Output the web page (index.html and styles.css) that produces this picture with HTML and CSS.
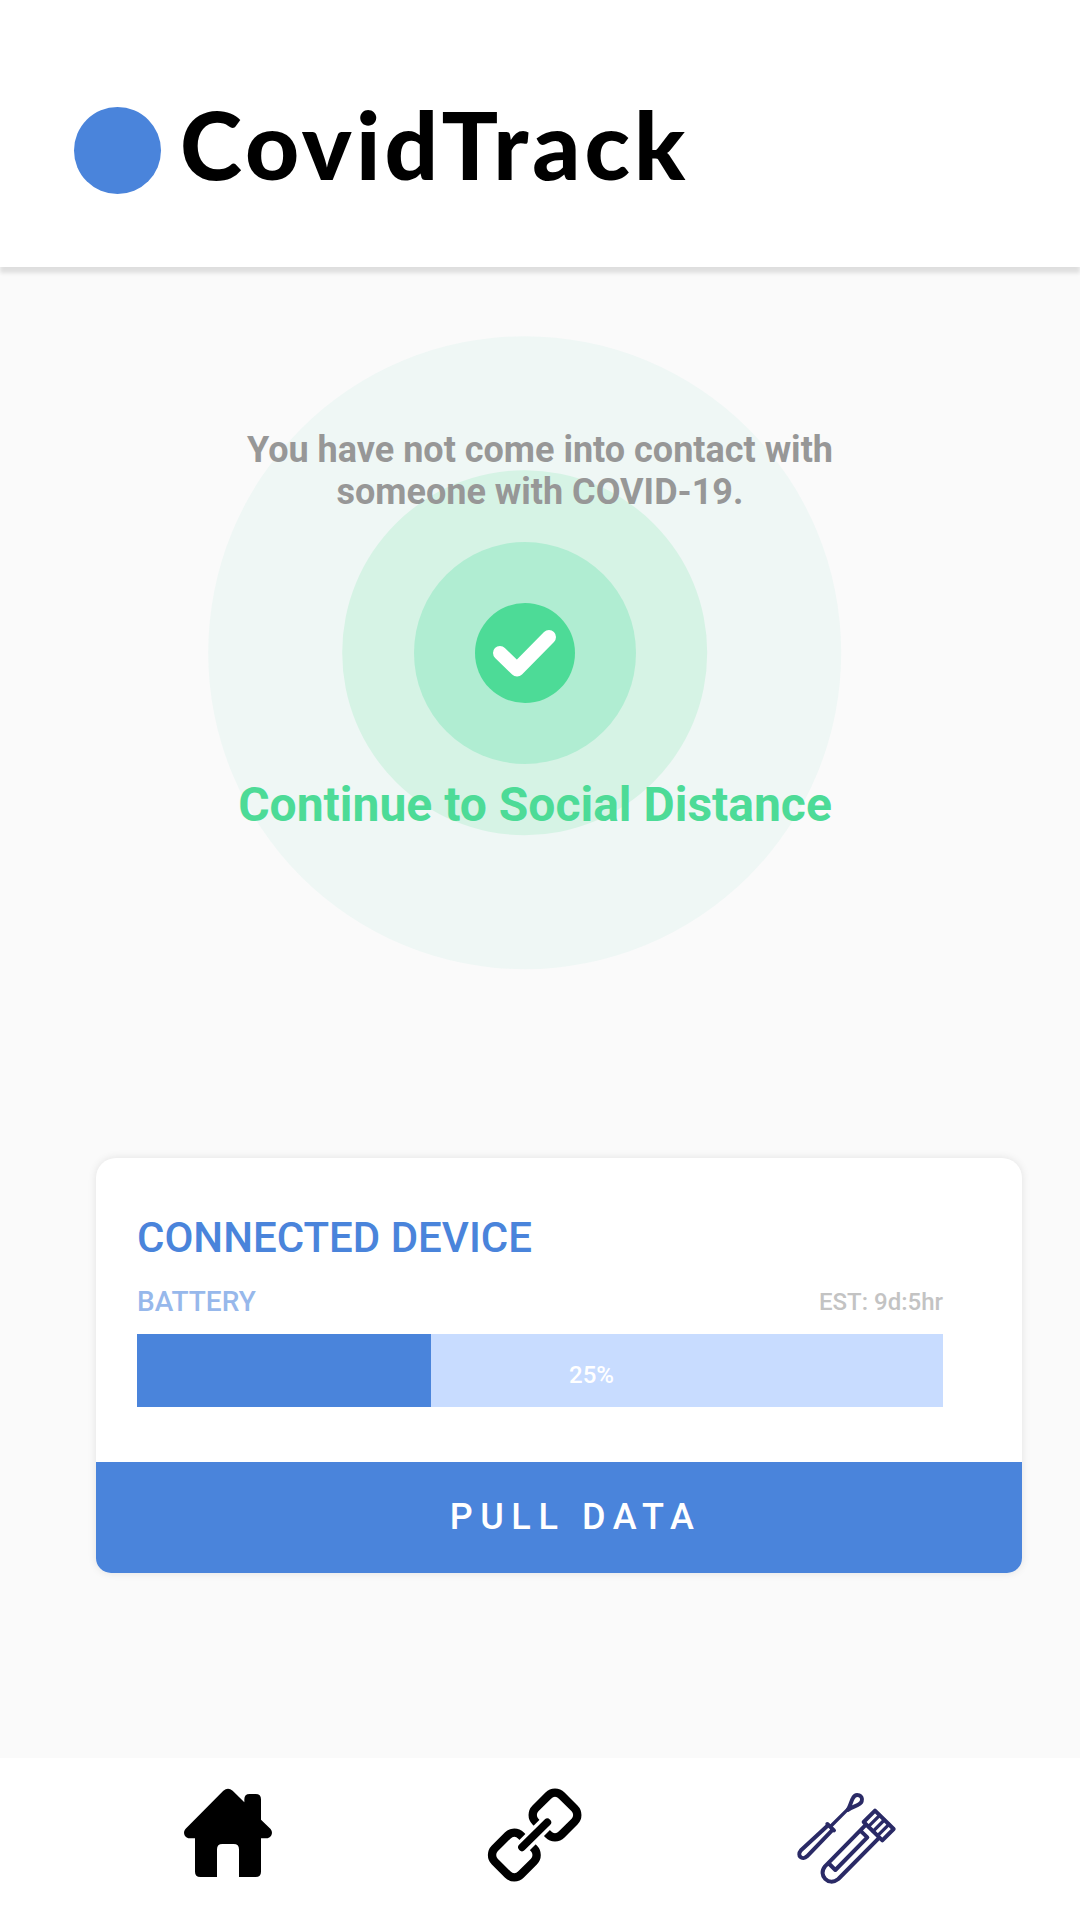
FILE: index.html
```html
<!DOCTYPE html>
<html lang="en">
<head>
<meta charset="utf-8">
<title>CovidTrack</title>
<link rel="stylesheet" href="styles.css">
</head>
<body>
<header class="header">
  <span class="logo-dot"></span>
  <h1 class="brand">CovidTrack</h1>
</header>
<main class="main">
  <section class="status">
    <svg class="rings" viewBox="0 0 634 634">
      <circle cx="316.700" cy="316.700" r="316.500" fill="#eff7f5"/>
      <circle cx="316.700" cy="316.700" r="182.500" fill="#d6f3e5"/>
      <circle cx="317" cy="317" r="111" fill="#b0edd2"/>
      <circle cx="317" cy="317" r="50" fill="#4ddb97"/>
      <path d="M292 317 L309 333.500 L341 301" fill="none" stroke="#fff" stroke-width="14" stroke-linecap="round" stroke-linejoin="round"/>
    </svg>
    <p class="contact">You have not come into contact with<br>someone with COVID-19.</p>
    <p class="advice">Continue to Social Distance</p>
  </section>
  <section class="card">
    <div class="card-body">
      <h2 class="card-title">CONNECTED DEVICE</h2>
      <div class="battery-row">
        <span class="battery-label">BATTERY</span>
        <span class="estimate">EST: 9d:5hr</span>
      </div>
      <div class="battery-bar"><span class="battery-value">25%</span></div>
    </div>
    <button class="pull">PULL DATA</button>
  </section>
</main>
<nav class="nav">
  <svg class="icon" viewBox="0 0 360 360">
    <path d="M160 62Q174 51 188 62L223 97V88Q223 72 239 72H257Q273 72 273 88V149L301 176C311 187 305 205 289 205H273V305Q273 321 257 321H207V238Q207 222 191 222H157Q141 222 141 238V321H91Q75 321 75 305V205H59C43 205 37 187 47 176Z"/>
  </svg>
  <svg class="icon icon-link" viewBox="0 0 360 360" fill="none" stroke="#000" stroke-width="25">
    <rect x="184.500" y="79.500" width="111" height="111" rx="28" transform="rotate(45 240 135)"/>
    <rect x="62.500" y="199.500" width="111" height="111" rx="28" transform="rotate(45 118 255)"/>
    <path d="M127 247L231 143" stroke="#fff" stroke-width="44"/>
    <path d="M141 232L217 157" stroke-width="23" stroke-linecap="round"/>
  </svg>
  <svg class="icon icon-test" viewBox="0 0 360 360" fill="none" stroke="#2a2a66" stroke-width="12" stroke-linejoin="round" stroke-linecap="round">
    <path d="M138 138L188 88" stroke-width="10"/>
    <path d="M188 90C196 78 198 64 204 54C213 38 236 46 230 64C226 76 206 78 188 90Z"/>
    <path d="M127 132L147 151M130 135L48 211C34 228 52 242 66 229L144 148"/>
    <path d="M270 92L326 147L292 181L236 126Z"/>
    <path d="M250 140L284 106M264 154L298 120M278 167L312 133" stroke-width="10"/>
    <path d="M240 137L120 259C98 285 130 321 160 297L280 176M226 152L247 172L151 270L133 252"/>
  </svg>
</nav>
</body>
</html>
```
FILE: styles.css
```css
* { box-sizing: border-box; }
body {
  margin: 0;
  width: 1080px;
  height: 1920px;
  display: flex;
  flex-direction: column;
  background: #fafafa;
  font-family: Roboto, sans-serif;
  overflow: hidden;
}
h1, h2, p { margin: 0; }
.header {
  height: 267px;
  flex: none;
  display: flex;
  align-items: flex-start;
  padding: 107px 74px 0;
  background: #fff;
  box-shadow: 0 6px 4px rgba(0, 0, 0, 0.11);
}
.logo-dot {
  width: 87px;
  height: 87px;
  border-radius: 50%;
  background: #4a84db;
}
.brand {
  margin: -23px 0 0 19px;
  font: 900 94px/120px Lato, sans-serif;
  letter-spacing: 4.1px;
  color: #000;
}
.main {
  flex: none;
  height: 1491px;
}
.status {
  position: relative;
  height: 891px;
  padding-top: 162px;
  text-align: center;
}
.rings {
  position: absolute;
  left: 208px;
  top: 69px;
  width: 634px;
  height: 634px;
}
.contact, .advice { position: relative; }
.contact {
  font-weight: 700;
  font-size: 36px;
  line-height: 42px;
  color: #979797;
}
.advice {
  margin-top: 264px;
  padding-right: 10px;
  font-weight: 700;
  font-size: 48px;
  line-height: 56px;
  color: #4ddb97;
}
.card {
  width: 926px;
  height: 415px;
  margin-left: 96px;
  display: flex;
  flex-direction: column;
  border-radius: 20px 20px 15px 15px;
  background: #fff;
  box-shadow: 0 0 8px rgba(0, 0, 0, 0.1);
}
.card-body {
  flex: 1;
  padding: 55px 79px 0 41px;
}
.card-title {
  font-weight: 500;
  font-size: 42px;
  line-height: 50px;
  color: #4a84db;
}
.battery-row {
  display: flex;
  justify-content: space-between;
  align-items: center;
  height: 40px;
  margin-top: 18px;
}
.battery-label {
  font-weight: 500;
  font-size: 28px;
  color: #97b8eb;
}
.estimate {
  padding-top: 2px;
  font-weight: 500;
  font-size: 24px;
  color: #c3c3c3;
}
.battery-bar {
  height: 73px;
  margin-top: 13px;
  padding: 8px 0 0 103px;
  display: flex;
  align-items: center;
  justify-content: center;
  background: linear-gradient(90deg, #4a84db 294px, #c8dcff 294px);
}
.battery-value {
  font-weight: 500;
  font-size: 24px;
  color: #fff;
}
.pull {
  height: 111px;
  border: 0;
  padding: 0 0 2px 33px;
  border-radius: 0 0 15px 15px;
  background: #4a84db;
  color: #fff;
  font: 500 36px Roboto, sans-serif;
  letter-spacing: 7.6px;
}
.nav {
  flex: 1;
  display: flex;
  align-items: flex-start;
  padding: 12px 0 0 170px;
  background: #fff;
}
.icon {
  width: 120px;
  height: 120px;
}
.icon-link { margin-left: 185px; }
.icon-test { margin: 10px 0 0 190px; }
```
